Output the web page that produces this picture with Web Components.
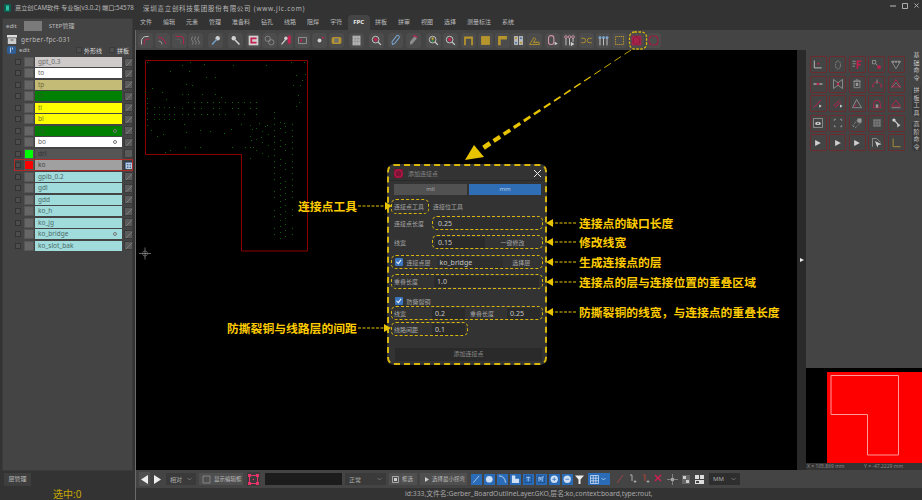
<!DOCTYPE html>
<html lang="zh">
<head>
<meta charset="utf-8">
<title>CAM</title>
<style>
  html, body { margin: 0; padding: 0; background: #333; overflow: hidden; }
  body { font-family: "Noto Sans", "Noto Sans CJK SC", sans-serif; width: 922px; height: 500px; }
</style>
</head>
<body>
<app-window></app-window>
<script>
const FONT = `"Noto Sans", "Noto Sans CJK SC", sans-serif`;

// small helper, every element gets an open shadow root from a string
function makeEl(name, html, setup) {
  const tpl = document.createElement('template');
  tpl.innerHTML = html;
  customElements.define(name, class extends HTMLElement {
    constructor() {
      super();
      this.attachShadow({ mode: 'open' });
      this.shadowRoot.appendChild(tpl.content.cloneNode(true));
    }
    connectedCallback() {
      if (setup) setup.call(this, this.shadowRoot);
    }
  });
}

// LAYER ROW
makeEl('layer-row', `
  <style>
    :host { display: grid; grid-template-columns: 7px 10px 87px 9px; column-gap: 1.5px; width: 117.5px; height: 10px; align-items: center; position: relative; font-size: 6.5px; }
    .chk { width: 6px; height: 6px; background: #4d4d4d; border: .5px solid #333; box-sizing: border-box; margin-right: 1px; }
    .sw { width: 10px; height: 10px; background: #666; box-sizing: border-box; border: .5px solid #555; }
    .bar { height: 10px; line-height: 10px; padding-left: 3px; box-sizing: border-box; display: flex; justify-content: space-between; }
    .mark { width: 4px; height: 4px; border: .7px solid #777; border-radius: 50%; margin: 3px 5px 0 0; box-sizing: border-box; }
    .end { width: 9px; height: 9px; background: #5a5a5a; border: .5px solid #3a3a3a; box-sizing: border-box; }
    svg { display: block; }
    :host([active])::before { content: ""; position: absolute; left: -1.5px; right: 0; top: -1px; bottom: -1px; border: .7px solid #b02a2a; }
  </style>
  <div class="chk"></div>
  <div class="sw"></div>
  <div class="bar"><span class="nm"></span><span class="mark"></span></div>
  <div class="end"></div>
`, function (root) {
  const bar = root.querySelector('.bar');
  bar.style.background = this.getAttribute('color') || '#a0dcdc';
  bar.style.color = this.getAttribute('ink') || '#4f6a6a';
  root.querySelector('.nm').textContent = this.getAttribute('name');
  const sw = this.getAttribute('swatch');
  if (sw) root.querySelector('.sw').style.background = sw;
  root.querySelector('.mark').style.display = this.hasAttribute('mark') ? 'block' : 'none';
  const end = root.querySelector('.end');
  const kind = this.getAttribute('end');
  if (kind === 'none') end.innerHTML = '';
  else if (kind === 'grid') {
    end.style.background = '#4a6f9c';
    end.innerHTML = '<svg viewBox="0 0 9 9" width="8" height="8"><path d="M1.5 1.5h6v6h-6zM4.500 1.500v6M1.500 4.500h6" fill="none" stroke="#e6eef8" stroke-width=".9"/></svg>';
  } else {
    end.innerHTML = '<svg viewBox="0 0 9 9" width="8" height="8"><path d="M1 8L8 1" stroke="#8a8a8a" stroke-width=".8"/></svg>';
  }
});

// LEFT PANEL
makeEl('layer-panel', `
  <style>
    :host { display: flex; flex-direction: column; width: 135px; height: 100%; background: #333; box-sizing: border-box; color: #bbb; }
    .box { margin: 3px 0 0 2px; width: 131px; height: 454px; background: #444; border: 1px solid #3a3a3a; box-sizing: border-box; display: flex; flex-direction: column; }
    .tabs { display: flex; align-items: center; height: 11px; margin-top: 1px; font-size: 6px; padding-left: 3px; }
    .tabs i { display: block; width: 18px; height: 10px; background: #7a7a7a; margin: 0 7px 0 7px; }
    .job { display: flex; align-items: center; height: 12px; margin-top: 2px; padding-left: 4px; font-size: 6.5px; letter-spacing: .3px; }
    .job svg { margin-right: 4px; }
    .ed { display: flex; align-items: center; height: 8px; margin-top: 1px; padding-left: 4px; font-size: 6px; }
    .ed svg { margin-right: 3px; display: block; }
    .ed .opt { margin-left: auto; display: flex; align-items: center; gap: 7px; padding-right: 3px; color: #ddd; }
    .ed .opt span { display: flex; align-items: center; gap: 2px; }
    .ed .opt i { display: block; width: 6px; height: 6px; background: #4d4d4d; border: .5px solid #3a3a3a; box-sizing: border-box; }
    .rows { display: grid; grid-auto-rows: 10px; row-gap: 1.47px; margin: 3px 0 0 12px; }
    .tab2 { height: 13px; margin-left: 4px; width: 27px; background: #3e3e3e; color: #bbb; font-size: 6px; line-height: 13px; text-align: center; margin-top: 2px; }
    .sel { margin-top: 2px; height: 12px; line-height: 12px; font-size: 10px; color: #c9a800; padding-left: 53px; white-space: nowrap; }
  </style>
  <div class="box">
    <div class="tabs"><span>edit</span><i></i><span>STEP管理</span></div>
    <div class="job">
      <svg width="10" height="9" viewBox="0 0 10 9"><path d="M0 0h10v2.500H0z" fill="#ddd"/><path d="M.8 3.200h8.400V9H.8z" fill="#ccc"/><path d="M3.500 4.500h3v1h-3z" fill="#555"/></svg>
      <span>gerber-fpc-031</span>
    </div>
    <div class="ed">
      <svg width="9" height="8" viewBox="0 0 9 8"><rect width="9" height="8" rx="2" fill="#2f5f96"/><path d="M3.500 1.500v5M5.500 1.500v2" stroke="#dfe9f5" stroke-width=".8"/></svg>
      <span>edit</span>
      <div class="opt"><span><i></i>外形线</span><span><i></i>拼板</span></div>
    </div>
    <div class="rows">
      <layer-row name="gpt_0.3" color="#cfcbcb" ink="#6a6a6a"></layer-row>
      <layer-row name="to" color="#ffffff" ink="#666"></layer-row>
      <layer-row name="tp" color="#c4bc76" ink="#6f6a3c"></layer-row>
      <layer-row name="ct" color="#008000" ink="#2f5f2f"></layer-row>
      <layer-row name="tl" color="#ffff00" ink="#77772a"></layer-row>
      <layer-row name="bl" color="#ffff00" ink="#77772a"></layer-row>
      <layer-row name="cb" color="#008000" ink="#2f5f2f" mark></layer-row>
      <layer-row name="bo" color="#ffffff" ink="#666" mark></layer-row>
      <layer-row name="drl" color="#555" ink="#333" swatch="#00ff00" end="none"></layer-row>
      <layer-row name="ko" color="#a0a0a0" ink="#444" swatch="#ff0000" end="grid" active></layer-row>
      <layer-row name="gpib_0.2"></layer-row>
      <layer-row name="gdl"></layer-row>
      <layer-row name="gdd"></layer-row>
      <layer-row name="ko_h"></layer-row>
      <layer-row name="ko_jg"></layer-row>
      <layer-row name="ko_bridge" mark></layer-row>
      <layer-row name="ko_slot_bak"></layer-row>
    </div>
  </div>
  <div class="tab2">层管理</div>
  <div class="sel">选中:0</div>
`);

// MENU TABS
makeEl('menu-tabs', `
  <style>
    :host { display: flex; height: 15px; background: #333; font-size: 6px; color: #bbb; align-items: stretch; padding-left: 0; margin-left: -1.500px; }
    span { display: block; padding: 0 5.5px; line-height: 15px; white-space: nowrap; }
    .on { background: #444; color: #eee; font-weight: 700; border-radius: 4px 4px 0 0; }
  </style>
`, function (root) {
  ['文件','编辑','元素','管理','准备料','钻孔','线路','阻焊','字符','FPC','拼板','拼审','视图','选择','测量标注','系统'].forEach(t => {
    const s = document.createElement('span');
    s.textContent = t;
    if (t === 'FPC') s.className = 'on';
    root.appendChild(s);
  });
});

// TOOL BAR
const R = '#d81b50', Y = '#c9a227', W = '#e8e8e8', G = '#a8a8a8', B = '#7fb0e0';
const TOOLS = [
  [2, `<path d="M3 12V8a5 5 0 0 1 5-5h3" fill="none" stroke="${W}" stroke-width="1"/><path d="M6 12V9a3 3 0 0 1 3-3h3" fill="none" stroke="${R}" stroke-width="1"/>`],
  [2, `<path d="M3 4a8 8 0 0 1 8 8" fill="none" stroke="${R}" stroke-width="1.600" stroke-dasharray="1.500 1"/><path d="M3 8a4 4 0 0 1 4 4" fill="none" stroke="${G}"/>`],
  [2, `<path d="M3 3h6a3 3 0 0 1 3 3v6" fill="none" stroke="${R}" stroke-width="1"/><path d="M3 6h4a2 2 0 0 1 2 2v4" fill="none" stroke="#666"/>`],
  [1, `<path d="M4 3q-2 4 0 5t0 4M7.500 3q-2 4 0 5t0 4M11 3q-2 4 0 5t0 4" fill="none" stroke="${G}" stroke-width=".8"/>`],
  [5, `<circle cx="10" cy="5" r="2.500" fill="${W}"/><path d="M9 6L3.500 12" stroke="${B}" stroke-width="1.600"/>`],
  [4.5, `<circle cx="5.500" cy="5" r="2.500" fill="${W}"/><path d="M7 7l5 5" stroke="${W}" stroke-width="1.800"/>`],
  [3, `<path d="M2 2h11v11H2z" fill="${W}"/><path d="M4 4h7v2H6v3h5v2H4z" fill="${R}"/>`],
  [1, `<circle cx="5.500" cy="5.500" r="3" fill="none" stroke="${G}" stroke-width=".8"/><circle cx="9.500" cy="9.500" r="3" fill="none" stroke="${G}" stroke-width=".8"/>`],
  [1.5, `<path d="M3 12L8 6" stroke="${W}" stroke-width="1.400"/><circle cx="8" cy="5" r="2" fill="${W}"/><path d="M10 2h3.500v9H10z" fill="${R}"/>`],
  [2, `<path d="M3 4h9v7H3z" fill="none" stroke="${G}"/><path d="M5 6h2v3H5z" fill="${R}"/>`],
  [1.5, `<circle cx="7.500" cy="7.500" r="2.200" fill="${W}"/><path d="M10 3l3 1-2 2z" fill="${R}"/>`],
  [2, `<rect x="2" y="3.500" width="11" height="8" rx="2" fill="${Y}"/><rect x="5" y="5" width="5" height="5" fill="#777"/>`],
  [5, `<path d="M3 2h9v11H3z" fill="#c8c8c8"/><path d="M3 5.500h9M3 8.500h9M6 2v11M9 2v11" stroke="#888" stroke-width=".5"/>`],
  [5, `<circle cx="6.500" cy="6.500" r="3.800" fill="none" stroke="${W}"/><circle cx="6.500" cy="6.500" r="2" fill="${R}"/><path d="M9.500 9.500l3 3" stroke="${W}" stroke-width="1.300"/>`],
  [4, `<path d="M4 12L3.500 9l5-6.500a1.500 1.500 0 0 1 3 2L6.500 11z" fill="none" stroke="${B}" stroke-width="1.200"/>`],
  [3, `<path d="M4 12.500L3.500 9l5-6 3 2-5 6z" fill="#999"/><path d="M7 2l5 1.500" stroke="${R}" stroke-width="1.400"/>`],
  [5, `<circle cx="6.500" cy="6.500" r="3.800" fill="none" stroke="${W}"/><circle cx="6.500" cy="5.500" r="1.300" fill="#e0c020"/><circle cx="6.500" cy="8" r="1.300" fill="#2a9a40"/><path d="M9.500 9.500l3 3" stroke="${W}" stroke-width="1.300"/>`],
  [2, `<circle cx="6.500" cy="6.500" r="3.800" fill="none" stroke="${W}"/><circle cx="6.500" cy="6.500" r="2" fill="${R}"/><path d="M9.500 9.500l3 3" stroke="${W}" stroke-width="1.300"/>`],
  [3, `<path d="M2.500 3h10v10h-2V5.500h-6V13h-2z" fill="${Y}"/>`],
  [2, `<path d="M2.500 2.500h10v10h-10z" fill="${Y}"/>`],
  [2, `<path d="M2.500 2.500h10v4h-7v6.500h-3z" fill="${Y}"/>`],
  [1, `<path d="M2.500 2.500h4.500v10H2.500z" fill="#d0d0d0"/><path d="M8 2.500h4.500v10H8z" fill="#d0d0d0"/><circle cx="4.700" cy="5" r="1.200" fill="${Y}"/><circle cx="10.200" cy="10" r="1.200" fill="${Y}"/><circle cx="10.200" cy="5" r="1.200" fill="#4a7fbf"/><circle cx="4.700" cy="10" r="1.200" fill="#4a7fbf"/>`],
  [1, `<path d="M2 12l5-8 2 2-3 4h7v2z" fill="none" stroke="${Y}"/><path d="M7 9h5" stroke="${Y}" stroke-dasharray="1 1"/>`],
  [3, `<rect x="3" y="2" width="6" height="10" rx="2.500" fill="none" stroke="#e8a0b8" stroke-width="1.300"/><path d="M10 9l3.500 2-3.500 2z" fill="${W}"/>`],
  [2, `<circle cx="3.500" cy="3.500" r="1.500" fill="none" stroke="#e8a0b8"/><circle cx="7.500" cy="3.500" r="1.500" fill="none" stroke="#e8a0b8"/><circle cx="11.500" cy="3.500" r="1.500" fill="none" stroke="#e8a0b8"/><path d="M3.500 5v8M7.500 5v8M11.500 5v4" stroke="${W}"/><path d="M9 9l4 2.500L9 14z" fill="${W}"/>`],
  [2, `<path d="M1.500 5h3q2 0 2 2.500t-2 2.500h-3M13.500 5h-3q-2 0-2 2.500t2 2.500h3" fill="none" stroke="${Y}"/>`],
  [2, `<circle cx="3.500" cy="4" r="1.700" fill="${B}"/><circle cx="7.500" cy="4" r="1.700" fill="${B}"/><circle cx="11.500" cy="4" r="1.700" fill="${B}"/><path d="M3.500 5v8M7.500 5v8M11.500 5v8" stroke="${W}"/>`],
  [1, `<path d="M3 3h9v9H3z" fill="none" stroke="${Y}" stroke-width="1.200" stroke-dasharray="1.300 .7"/>`],
  [2, `<path d="M2 2h11v11H2z" fill="#b81c4a"/><path d="M4 5l3-2 4 2v5l-4 2-3-2z" fill="none" stroke="#7d1436" stroke-width=".8"/>`],
  [2, `<path d="M5 2.500h5l2.500 2.500v5L10 12.500H5L2.500 10V5z" fill="none" stroke="#a3193f" stroke-width="1.200"/><circle cx="3.500" cy="3.500" r="1" fill="#a3193f"/><circle cx="11.500" cy="3.500" r="1" fill="#a3193f"/><circle cx="3.500" cy="11.500" r="1" fill="#a3193f"/><circle cx="11.500" cy="11.500" r="1" fill="#a3193f"/>`]
];
makeEl('tool-bar', `
  <style>
    :host { display: flex; height: 20px; background: #444; align-items: center; padding-bottom: 0; }
    .b { width: 15px; height: 15px; background: #4c4c4c; border-radius: 3px; flex: none; }
    svg { display: block; opacity: .85; }
  </style>
`, function (root) {
  TOOLS.forEach(t => {
    const d = document.createElement('div');
    d.className = 'b';
    d.style.marginLeft = t[0] + 'px';
    d.innerHTML = `<svg width="15" height="15" viewBox="-1 -1 17 17">${t[1]}</svg>`;
    root.appendChild(d);
  });
});

// BOARD VIEW
makeEl('board-view', `
  <style>
    :host { display: block; flex: 1; background: #000; position: relative; min-width: 0; }
    svg { display: block; }
  </style>
  <svg width="661" height="420" viewBox="136 50 661 420"></svg>
`, function (root) {
  const svg = root.querySelector('svg');
  let s = `<path d="M145.500 60.500H307.500V251H241.500V154.500H145.500Z" fill="none" stroke="#8c0000" stroke-width="1"/>
    <path d="M139 253.500H151M145 247.500V259.500" stroke="#ccc" stroke-width=".5"/><circle cx="145" cy="253.500" r="2.500" fill="none" stroke="#999" stroke-width=".5"/>`;
  const dot = (x, y, o) => { s += `<rect x="${x}" y="${y}" width="1" height="1" fill="#0c7a0c" opacity="${o}"/>`; };
  const pts = [[147,62],[182,65],[190,62],[204,64],[233,65],[266,65],[291,62],[304,62],[170,71],[189,71],[206,77],[215,77],[192,85],[186,84],[145,92],[147,98],[147,103],[147,108],[147,113],[147,119],[147,125],[152,88],[162,92],[182,94],[188,94],[202,94],[215,94],[221,97],[166,99],[296,75],[300,85],[293,85],[298,95],[299,102],[296,106],[305,74],[302,80],[151,130],[157,136],[163,134],[184,124],[186,132],[200,130],[210,131],[224,133],[231,129],[241,124],[252,129],[165,152],[170,150],[185,147],[200,147],[232,147],[245,147],[253,147],[251,140],[265,126],[284,123],[259,123],[261,137],[267,125]];
  pts.forEach(p => dot(p[0], p[1], .85));
  [102,108,114].forEach(y => { for (let x = 182; x < 258; x += 6.2) if ((x * 7 + y) % 5 > 1) dot(Math.round(x), y, .9); });
  [114,107,119].forEach(y => { for (let x = 154; x < 176; x += 5) dot(Math.round(x), y, .7); });
  [274,280,285,292].forEach((x, i) => { for (let y = 112 + i * 4; y < 240; y += 6.1) if ((y + x) % 9 > 1) dot(x, Math.round(y), .8); });
  [250,256,262,268].forEach((x, i) => { for (let y = 125 + i * 3; y < 160; y += 11) dot(x, Math.round(y), .7); });
  svg.innerHTML = s;
});

// RIGHT DOCK
const DOCK = [
  `<path d="M4 3v9h9" fill="none" stroke="${W}"/><circle cx="9" cy="7" r="1.200" fill="${R}"/>`,
  `<ellipse cx="8.500" cy="8.500" rx="3" ry="5" fill="none" stroke="${G}" stroke-dasharray="2 1"/>`,
  `<path d="M3 4h4M3 7h4M3 10h3" stroke="${G}"/><path d="M8 3h6v2H10v2h3v2h-3v4H8z" fill="${R}"/>`,
  `<path d="M3 3h4v4H3z" fill="none" stroke="${G}"/><path d="M9 9h4v4H9z" fill="${R}"/><path d="M7 7l2 2" stroke="${G}"/>`,
  `<path d="M3 4h11L8.500 13z" fill="none" stroke="${G}"/><circle cx="5" cy="5" r="1.200" fill="${G}"/><circle cx="8.500" cy="5" r="1.200" fill="${G}"/><circle cx="12" cy="5" r="1.200" fill="${G}"/>`,
  `<path d="M3 8.500h4M10 8.500h4" stroke="${W}" stroke-width="1.400"/><circle cx="8.500" cy="8.500" r="1.500" fill="${R}"/>`,
  `<path d="M3 3l5.500 4V10L3 14zM14 3L8.500 7V10L14 14z" fill="none" stroke="${G}"/><circle cx="8.500" cy="8.500" r="1.500" fill="${R}"/>`,
  `<path d="M5 5h7v8H5zM4 5h9M7 3.500h3" fill="none" stroke="${G}"/><path d="M7 7h3v4H7z" fill="${G}"/>`,
  `<path d="M3 12a5.500 6 0 0 1 11 0M3 12h2M12 12h2" fill="none" stroke="${R}"/><path d="M8.500 3v5" stroke="${G}"/>`,
  `<path d="M8.500 3L14 12H3z" fill="none" stroke="${R}"/><path d="M8.500 7L3 13M8.500 7L14 13" stroke="${G}" stroke-width=".7"/>`,
  `<path d="M3 13L12 4" stroke="${R}" stroke-width="1.200"/><path d="M10 9l3 2-3 2z" fill="${W}"/>`,
  `<path d="M3 11L10 4M5 13L12 6" stroke="${R}" stroke-width="1.200"/><path d="M11 9l3 2-3 2z" fill="${W}"/>`,
  `<path d="M8 3L14 13H3z" fill="none" stroke="${G}"/><path d="M5 13l3-5" stroke="${R}"/>`,
  `<path d="M3 13h11M4.500 13V8a4 4 0 0 1 8 0v5" fill="none" stroke="${R}"/><path d="M7 9h3v4H7z" fill="${G}"/>`,
  `<path d="M8.500 4L14 11H3z" fill="none" stroke="${R}"/><path d="M3 13h11" stroke="${G}"/>`,
  `<path d="M3 3h11v11H3z" fill="none" stroke="${G}"/><ellipse cx="8.500" cy="9" rx="3.500" ry="2" fill="${W}"/><circle cx="8.500" cy="9" r="1" fill="#444"/>`,
  `<path d="M4 4h2M4 4v2M13 4h-2M13 4v2M4 13h2M4 13v-2M13 13h-2M13 13v-2" stroke="${G}" fill="none"/>`,
  `<path d="M3 12l6-7 4 3-6 6z" fill="none" stroke="${G}" stroke-dasharray="1.500 1"/><path d="M9 3h5v5H9z" fill="${G}"/>`,
  `<path d="M4 4h9v9H4z" fill="#888"/><path d="M4 7h9M4 10h9M7 4v9M10 4v9" stroke="#555" stroke-width=".7"/>`,
  `<circle cx="6" cy="5" r="2" fill="${W}"/><path d="M7 6l4 4" stroke="${W}" stroke-width="1.400"/><path d="M10 9l4 2-4 3z" fill="${W}"/>`,
  `<path d="M5 5l7 3.500L5 12z" fill="${W}"/>`,
  `<path d="M5 5l7 3.500L5 12z" fill="${W}"/>`,
  `<path d="M5 5l7 3.500L5 12z" fill="${W}"/>`,
  `<path d="M3 3h5L13 8" fill="none" stroke="${G}"/><path d="M3 3v10" stroke="${G}"/><path d="M6 6l8 4-4 1-1 3z" fill="${W}"/>`,
  `<path d="M5 3v10h9" fill="none" stroke="#b89a3a" stroke-width="1.200"/>`
];
makeEl('side-tab', `
  <style>
    :host { display: block; width: 9px; box-sizing: border-box; font-size: 6px; line-height: 7.500px; text-align: center; color: #c8c8c8; border-radius: 4px 0 0 4px; }
    :host([on]) { background: #3a3a3a; }
  </style>
  <slot></slot>
`);
makeEl('mini-map', `
  <style>
    :host { display: flex; flex-direction: column; height: 102px; background: #000; }
    .view { flex: 1; padding: 4px 0 0 20.500px; display: flex; }
    .red { flex: 1; background: #ff0000; }
    svg { display: block; }
    .xy { height: 7px; background: #333; display: flex; font-size: 5px; line-height: 7px; color: #888; padding-left: 1px; }
    .xy span { width: 57px; white-space: nowrap; }
  </style>
  <div class="view"><div class="red"><svg width="96" height="91" viewBox="0 0 96 91"><path d="M4 3.500H71.500V83H40.500V42.500H4Z" fill="none" stroke="#ff9a9a" stroke-width="1"/></svg></div></div>
  <div class="xy"><span>X = 105.869 mm</span><span>Y = -47.2229 mm</span></div>
`);
makeEl('right-dock', `
  <style>
    :host { display: flex; width: 125px; flex: none; }
    .strip { width: 9px; background: #2a2a2a; display: flex; align-items: center; justify-content: center; }
    .strip i { display: block; width: 0; height: 0; border-left: 4px solid #eee; border-top: 2.500px solid transparent; border-bottom: 2.500px solid transparent; }
    .col { flex: 1; display: flex; flex-direction: column; min-width: 0; }
    .top { flex: 1; background: #444; display: flex; justify-content: space-between; }
    .grid { display: grid; grid-template-columns: repeat(5, 17px); grid-auto-rows: 17px; gap: 2.500px; margin: 6px 0 0 3.500px; align-self: start; }
    .grid div { border: .7px solid #6e2a2e; border-radius: 1.500px; box-sizing: border-box; display: flex; align-items: center; justify-content: center; }
    svg { display: block; opacity: .85; }
    .tabs { width: 10px; padding-top: 2px; display: flex; flex-direction: column; }
  </style>
  <div class="strip"><i></i></div>
  <div class="col">
    <div class="top">
      <div class="grid"></div>
      <div class="tabs">
        <side-tab style="margin-bottom:5px">基<br>础<br>命<br>令</side-tab>
        <side-tab on style="margin-bottom:4px">拼<br>板<br>工<br>具</side-tab>
        <side-tab on>高<br>阶<br>命<br>令</side-tab>
      </div>
    </div>
    <mini-map></mini-map>
  </div>
`, function (root) {
  root.querySelector('.grid').innerHTML = DOCK.map(d => `<div><svg width="14" height="14" viewBox="0 0 17 17">${d}</svg></div>`).join('');
});

// BOTTOM BAR
makeEl('drop-box', `
  <style>
    :host { display: flex; align-items: center; justify-content: space-between; height: 12px; background: #3a3a3a; color: #aaa; font-size: 6px; padding: 0 4px; box-sizing: border-box; flex: none; }
    svg { display: block; }
  </style>
  <slot></slot>
  <svg width="5" height="4" viewBox="0 0 5 4"><path d="M.5 1L2.500 3 4.500 1" fill="none" stroke="#888" stroke-width=".7"/></svg>
`);
makeEl('blue-btn', `
  <style>
    :host { display: block; width: 10.500px; height: 11px; background: #2a6cb8; flex: none; margin-right: 2.500px; }
    svg { display: block; }
  </style>
  <slot></slot>
`);
makeEl('bottom-bar', `
  <style>
    :host { display: flex; height: 18px; background: #444; align-items: center; padding-left: 3px; box-sizing: border-box; flex: none; }
    svg { display: block; flex: none; }
    .pl { background: #505050; height: 14px; width: 11px; display: flex; align-items: center; justify-content: center; margin-right: 3px; flex: none; }
    .btn { height: 12px; background: #4f4f4f; color: #bbb; font-size: 5.500px; display: flex; align-items: center; gap: 3px; padding-left: 3px; box-sizing: border-box; flex: none; white-space: nowrap; }
    .icon { width: 13px; height: 14px; background: #3a3a3a; display: flex; align-items: center; justify-content: center; flex: none; }
    .inp { width: 77px; height: 12px; background: #1c1c1c; flex: none; }
    .row { display: flex; align-items: center; flex: none; }
    .plain { width: 13px; height: 13px; flex: none; display: flex; align-items: center; justify-content: center; }
  </style>
  <div class="pl"><svg width="8" height="9" viewBox="0 0 8 9"><path d="M7 0v9L0 4.500z" fill="#eee"/></svg></div>
  <div class="pl" style="background:none;width:9px;margin-right:4px"><svg width="7" height="9" viewBox="0 0 7 9"><path d="M0 0v9L7 4.500z" fill="#eee"/></svg></div>
  <drop-box style="width:30px">相对</drop-box>
  <div class="btn" style="width:44px;margin-left:3px"><svg width="9" height="9" viewBox="0 0 9 9"><path d="M1 1h7v7H1z" fill="none" stroke="#aaa" stroke-width=".6"/></svg>显示编辑框</div>
  <div class="icon" style="margin-left:4px"><svg width="11" height="11" viewBox="0 0 11 11"><path d="M1.500 1.500h8v8h-8z" fill="none" stroke="#e8336a" stroke-width="1"/><circle cx="5.500" cy="5.500" r=".8" fill="#e8336a"/><path d="M0 0h3v3H0zM8 0h3v3H8zM0 8h3v3H0zM8 8h3v3H8z" fill="#e8336a"/></svg></div>
  <div class="inp" style="margin-left:5px"></div>
  <drop-box style="width:41px;margin-left:3px">正常</drop-box>
  <div class="btn" style="width:28px;margin-left:3px"><svg width="7" height="7" viewBox="0 0 7 7"><path d="M.5.500h6v6h-6z" fill="none" stroke="#ccc" stroke-width=".7"/><path d="M2 2h3v3H2z" fill="#ccc"/></svg>框选</div>
  <div class="btn" style="width:47px;margin-left:3px;padding-left:5px"><svg width="4" height="5" viewBox="0 0 4 5"><path d="M0 0v5L4 2.500z" fill="#ccc"/></svg>选择最小拐弯</div>
  <div class="row" style="margin-left:4px">
    <blue-btn><svg viewBox="0 0 11 11"><path d="M2.500 9L8.500 2" stroke="#cfe0f5" stroke-width=".8"/></svg></blue-btn>
    <blue-btn><svg viewBox="0 0 11 11"><circle cx="5.500" cy="5.500" r="3.500" fill="#cfe0f5"/></svg></blue-btn>
    <blue-btn><svg viewBox="0 0 11 11"><path d="M2 2q6 0 7 7" fill="none" stroke="#cfe0f5" stroke-width=".9"/></svg></blue-btn>
    <blue-btn><svg viewBox="0 0 11 11"><path d="M2 1.500h3.500v3.500H9.500V9.500H2z" fill="#cfe0f5"/></svg></blue-btn>
    <blue-btn><svg viewBox="0 0 11 11"><path d="M2 2h7v7H2z" fill="none" stroke="#15345c" stroke-dasharray="1 1"/><path d="M3.500 3.500h4M5.500 3.500v4" stroke="#cfe0f5" stroke-width=".8"/></svg></blue-btn>
    <blue-btn><svg viewBox="0 0 11 11"><path d="M2 2h7v7H2z" fill="none" stroke="#15345c" stroke-dasharray="1 1"/><path d="M3 8V3l2 3V3M6.500 8V3h2" fill="none" stroke="#cfe0f5" stroke-width=".7"/></svg></blue-btn>
    <blue-btn><svg viewBox="0 0 11 11"><circle cx="5.500" cy="5.500" r="3.800" fill="#cfe0f5"/><path d="M5.500 3.500v4M3.500 5.500h4" stroke="#2a6cb8" stroke-width=".8"/></svg></blue-btn>
    <blue-btn><svg viewBox="0 0 11 11"><circle cx="5.500" cy="5.500" r="3.800" fill="#cfe0f5"/><path d="M3.500 5.500h4" stroke="#2a6cb8" stroke-width=".8"/></svg></blue-btn>
    <svg width="9" height="9" viewBox="0 0 9 9"><path d="M0 .5h9L5.500 4.500V9h-2V4.500z" fill="#eee"/></svg>
  </div>
  <div class="row" style="margin-left:4px;background:#2a6cb8;width:22px;height:12px;padding-left:2px;box-sizing:border-box;gap:2px">
    <svg width="9" height="9" viewBox="0 0 9 9"><path d="M.5.500h8v8h-8zM3.200.5v8M5.800.5v8M.5 3.200h8M.5 5.800h8" fill="none" stroke="#dce8f6" stroke-width=".7"/></svg>
    <svg width="5" height="4" viewBox="0 0 5 4"><path d="M.5 1L2.500 3 4.500 1" fill="none" stroke="#cfe0f5" stroke-width=".7"/></svg>
  </div>
  <div class="row" style="margin-left:3px">
    <div class="plain"><svg width="10" height="10" viewBox="0 0 10 10"><path d="M2 9L8 1" stroke="#a8434f" stroke-width=".9"/></svg></div>
    <div class="plain"><svg width="10" height="10" viewBox="0 0 10 10"><path d="M2 1h2v6" fill="none" stroke="#ccc" stroke-width=".8"/><path d="M7 6v3M5.500 7.500h3" stroke="#ccc" stroke-width=".6"/></svg></div>
    <div class="plain"><svg width="10" height="10" viewBox="0 0 10 10"><path d="M2 1h2v6" fill="none" stroke="#c43" stroke-width=".8"/><path d="M7 6v3M5.500 7.500h3" stroke="#ccc" stroke-width=".6"/></svg></div>
    <div class="plain"><svg width="10" height="10" viewBox="0 0 10 10"><path d="M1 1l6 6M7 1L1 7" stroke="#d81b50" stroke-width="1.300"/></svg></div>
    <div class="plain" style="margin-left:1px"><svg width="11" height="11" viewBox="0 0 11 11"><circle cx="5.500" cy="5.500" r="1.800" fill="#bbb"/><path d="M5.500 0v11M0 5.500h11" stroke="#999" stroke-width=".7"/></svg></div>
    <div class="plain"><svg width="10" height="11" viewBox="0 0 10 11"><path d="M1 1h8v9H1z" fill="#666"/><path d="M2 2h3v3H2zM5 6h3v3H5z" fill="#ccc"/></svg></div>
    <div class="plain" style="margin-left:1px"><svg width="11" height="11" viewBox="0 0 11 11"><path d="M1 1h9v9H1z" fill="#ddd"/><path d="M1 5.500h9M5.500 1v4.500" stroke="#444"/><path d="M2 7h3v2H2z" fill="#444"/></svg></div>
  </div>
  <drop-box style="width:31px;margin-left:3px;background:#2e2e2e">MM</drop-box>
`);

makeEl('status-line', `
  <style>
    :host { display: block; height: 12px; background: #333; color: #aaa; font-size: 6.800px; line-height: 12px; padding-left: 269px; white-space: nowrap; }
  </style>
  <slot></slot>
`);

// DIALOG PARTS
makeEl('dash-box', `
  <style>
    :host { display: flex; align-items: center; box-sizing: border-box; border: 1.200px dashed #d8b60c; border-radius: 5px; flex: none; padding: 0 2px; white-space: nowrap; }
  </style>
  <slot></slot>
`);
makeEl('num-field', `
  <style>
    :host { display: flex; align-items: center; height: 11px; background: #2a2a2a; color: #c8c8c8; font-size: 7px; padding-left: 3px; box-sizing: border-box; flex: none; }
  </style>
  <slot></slot>
`);
makeEl('tick-box', `
  <style>
    :host { display: block; width: 7.500px; height: 7.500px; background: #3a75bd; border-radius: 1px; flex: none; }
    svg { display: block; }
  </style>
  <svg width="7.500" height="7.500" viewBox="0 0 8 8"><path d="M1.500 4l2 2L6.500 2" fill="none" stroke="#eaf2fb" stroke-width="1.100"/></svg>
`);
makeEl('link-dialog', `
  <style>
    :host { position: absolute; left: 387px; top: 164px; width: 160px; height: 201px; background: #333; border: 2px dashed #d8b60c; border-radius: 7px; box-sizing: border-box; color: #a8a8a8; font-size: 6px; display: flex; flex-direction: column; padding: 0 2px; }
    svg { display: block; flex: none; }
    .head { display: flex; align-items: center; height: 15px; flex: none; border-bottom: .5px solid #2a2a2a; margin: 0 -2px; padding: 0 3px 0 5px; box-sizing: border-box; }
    .head span { margin-left: 5px; color: #888; }
    .head svg:last-child { margin-left: auto; }
    .seg { display: flex; gap: 2px; margin: 3px 0 0 3px; height: 11px; flex: none; }
    .seg div { width: 73px; text-align: center; line-height: 11px; color: #aaa; background: #515151; }
    .seg div + div { background: #2f6db5; color: #b8cfe8; width: 72px; }
    .line { display: flex; align-items: center; flex: none; height: 15px; }
    .lab { width: 41px; padding-left: 3px; box-sizing: border-box; flex: none; white-space: nowrap; }
    .chk { display: flex; align-items: center; gap: 4px; padding-left: 4px; flex: none; height: 8px; margin-top: 8px; }
    .go { height: 13px; background: #2a2a2a; margin: 12px 1px 0 4px; text-align: center; line-height: 13px; color: #8a8a8a; flex: none; }
    .sel { flex: 1; text-align: center; }
  </style>
  <div class="head">
    <svg width="9" height="9" viewBox="0 0 9 9"><path d="M0 0h9v9H0z" fill="#7d1436"/><path d="M3 1h3l2 2v3L6 8H3L1 6V3z" fill="none" stroke="#d81b50" stroke-width=".8"/></svg>
    <span>添加连接点</span>
    <svg width="9" height="9" viewBox="0 0 9 9"><path d="M1 1l7 7M8 1L1 8" stroke="#eee" stroke-width="1"/></svg>
  </div>
  <div class="seg"><div>mil</div><div>mm</div></div>
  <div class="line" style="margin-top:4px">
    <dash-box style="width:38px;height:15px;padding-left:2px">连接点工具</dash-box>
    <span style="margin-left:4px">连接位工具</span>
  </div>
  <div class="line" style="margin-top:2px;height:14px">
    <span class="lab">连接点长度</span>
    <dash-box style="width:111px;height:14px"><num-field style="width:100%;background:#2e2e2e">0.25</num-field></dash-box>
  </div>
  <div class="line" style="margin-top:5px;height:14px">
    <span class="lab">线宽</span>
    <dash-box style="width:111px;height:14px"><num-field style="width:50px">0.15</num-field><span class="sel">一键修改</span></dash-box>
  </div>
  <div class="line" style="margin-top:6px;height:14px">
    <dash-box style="width:152px;height:14px;padding-left:3px">
      <tick-box></tick-box>
      <span style="margin-left:4px;width:30px">连接点层</span>
      <num-field style="width:66px;background:#2e2e2e">ko_bridge</num-field>
      <span class="sel">选择层</span>
    </dash-box>
  </div>
  <div class="line" style="margin-top:5px;height:15px">
    <dash-box style="width:152px;height:15px;padding-left:2px">
      <span style="width:40px">重叠长度</span>
      <num-field style="width:105px">1.0</num-field>
    </dash-box>
  </div>
  <div class="chk"><tick-box></tick-box><span>防撕裂铜</span></div>
  <div class="line" style="margin-top:1px;height:14px">
    <dash-box style="width:152px;height:14px;padding-left:2px">
      <span style="width:38px">线宽</span>
      <num-field style="width:33px">0.2</num-field>
      <span style="margin-left:5px;width:37px">重叠长度</span>
      <num-field style="width:33px">0.25</num-field>
    </dash-box>
  </div>
  <div class="line" style="margin-top:2px;height:14px">
    <dash-box style="width:77px;height:14px;padding-left:2px">
      <span style="width:38px">线路间距</span>
      <num-field style="width:33px">0.1</num-field>
    </dash-box>
  </div>
  <div class="go">添加连接点</div>
`);

// ANNOTATION TEXT AND ARROWS ON TOP OF THE SHOT
makeEl('call-out', `
  <style>
    :host { position: absolute; color: #ffcc00; font-size: 11.800px; font-weight: 700; line-height: 14px; white-space: nowrap; }
  </style>
  <slot></slot>
`, function () {
  this.style.left = this.getAttribute('x') + 'px';
  this.style.top = (this.getAttribute('y') - 7) + 'px';
});
makeEl('arrow-layer', `
  <style>
    :host { position: absolute; left: 0; top: 0; width: 922px; height: 500px; pointer-events: none; }
    svg { display: block; }
  </style>
  <svg width="922" height="500" viewBox="0 0 922 500"></svg>
`, function (root) {
  const col = '#e8c400';
  let s = `<rect x="629.500" y="32" width="17" height="17" rx="5" fill="none" stroke="#d8b60c" stroke-width="1.300" stroke-dasharray="2.500 1.500"/>`;
  const right = (x1, x2, y) => {
    s += `<path d="M${x1} ${y}H${x2 - 7}" stroke="${col}" stroke-width="1" stroke-dasharray="3 1.500"/><path d="M${x2} ${y}l-7 -4v8z" fill="${col}"/>`;
  };
  const left = (x1, x2, y) => {
    s += `<path d="M${x1} ${y}H${x2 + 7}" stroke="${col}" stroke-width="1" stroke-dasharray="3 1.500"/><path d="M${x2} ${y}l7 -4v8z" fill="${col}"/>`;
  };
  right(358, 392, 206);
  right(358, 391, 328);
  [223, 242, 262, 282, 312].forEach(y => left(576, 546, y));
  // long arrow from the toolbar down to the dialog, it gets thicker on the way
  const x0 = 631, y0 = 50, x1 = 480, y1 = 150, n = 15;
  for (let i = 0; i < n; i++) {
    const a = i / n, b = (i + .65) / n;
    const w = .8 + a * a * 4.5;
    s += `<line x1="${x0 + (x1 - x0) * a}" y1="${y0 + (y1 - y0) * a}" x2="${x0 + (x1 - x0) * b}" y2="${y0 + (y1 - y0) * b}" stroke="${col}" stroke-width="${w}"/>`;
  }
  s += `<path d="M465 160L474 145L484 157Z" fill="${col}"/>`;
  root.querySelector('svg').innerHTML = s;
});

// WHOLE WINDOW
makeEl('app-window', `
  <style>
    :host { display: flex; flex-direction: column; width: 922px; height: 500px; position: relative; background: #333; font-family: ${FONT}; overflow: hidden; }
    .title { height: 15px; display: flex; align-items: center; color: #b8b8b8; font-size: 6.200px; flex: none; padding-left: 4px; white-space: nowrap; }
    .title svg { display: block; flex: none; }
    .title .a { margin-left: 4px; width: 128px; flex: none; }
    .title .b { font-size: 6.500px; letter-spacing: .72px; }
    .win { margin-left: auto; display: flex; align-items: center; gap: 6px; padding: 0 3px 4px 0; }
    .main { flex: 1; display: flex; min-height: 0; }
    .sep { width: 1px; background: #6a6a6a; flex: none; }
    .right { flex: 1; display: flex; flex-direction: column; min-width: 0; }
    .work { flex: 1; display: flex; min-height: 0; }
  </style>
  <div class="title">
    <svg width="7" height="8" viewBox="0 0 7 8"><path d="M0 0h7v8H0z" fill="#0c5c50"/><path d="M2 1.500h3v5H2z" fill="#2fc0a0"/></svg>
    <span class="a">嘉立创CAM软件 专业版(v3.0.2) 端口:54578</span>
    <span class="b">深圳嘉立创科技集团股份有限公司 (www.jlc.com)</span>
    <div class="win">
      <svg width="6" height="2" viewBox="0 0 6 2"><path d="M0 1h6" stroke="#bbb" stroke-width="1"/></svg>
      <svg width="6" height="6" viewBox="0 0 6 6"><path d="M.5.500h5v5h-5z" fill="none" stroke="#bbb" stroke-width=".9"/></svg>
      <svg width="5" height="5" viewBox="0 0 5 5"><path d="M.5.500l4 4M4.500.5l-4 4" stroke="#bbb" stroke-width=".9"/></svg>
    </div>
  </div>
  <div class="main">
    <layer-panel></layer-panel>
    <div class="sep"></div>
    <div class="right">
      <menu-tabs></menu-tabs>
      <tool-bar></tool-bar>
      <div class="work">
        <board-view></board-view>
        <right-dock></right-dock>
      </div>
      <bottom-bar></bottom-bar>
      <status-line>id:333,文件名:Gerber_BoardOutlineLayer.GKO,层名:ko,context:board,type:rout,</status-line>
    </div>
  </div>
  <link-dialog></link-dialog>
  <arrow-layer></arrow-layer>
  <call-out x="298" y="206">连接点工具</call-out>
  <call-out x="579" y="223">连接点的缺口长度</call-out>
  <call-out x="579" y="242">修改线宽</call-out>
  <call-out x="579" y="262">生成连接点的层</call-out>
  <call-out x="579" y="282">连接点的层与连接位置的重叠区域</call-out>
  <call-out x="579" y="312">防撕裂铜的线宽，与连接点的重叠长度</call-out>
  <call-out x="227" y="328">防撕裂铜与线路层的间距</call-out>
`);
</script>
</body>
</html>
